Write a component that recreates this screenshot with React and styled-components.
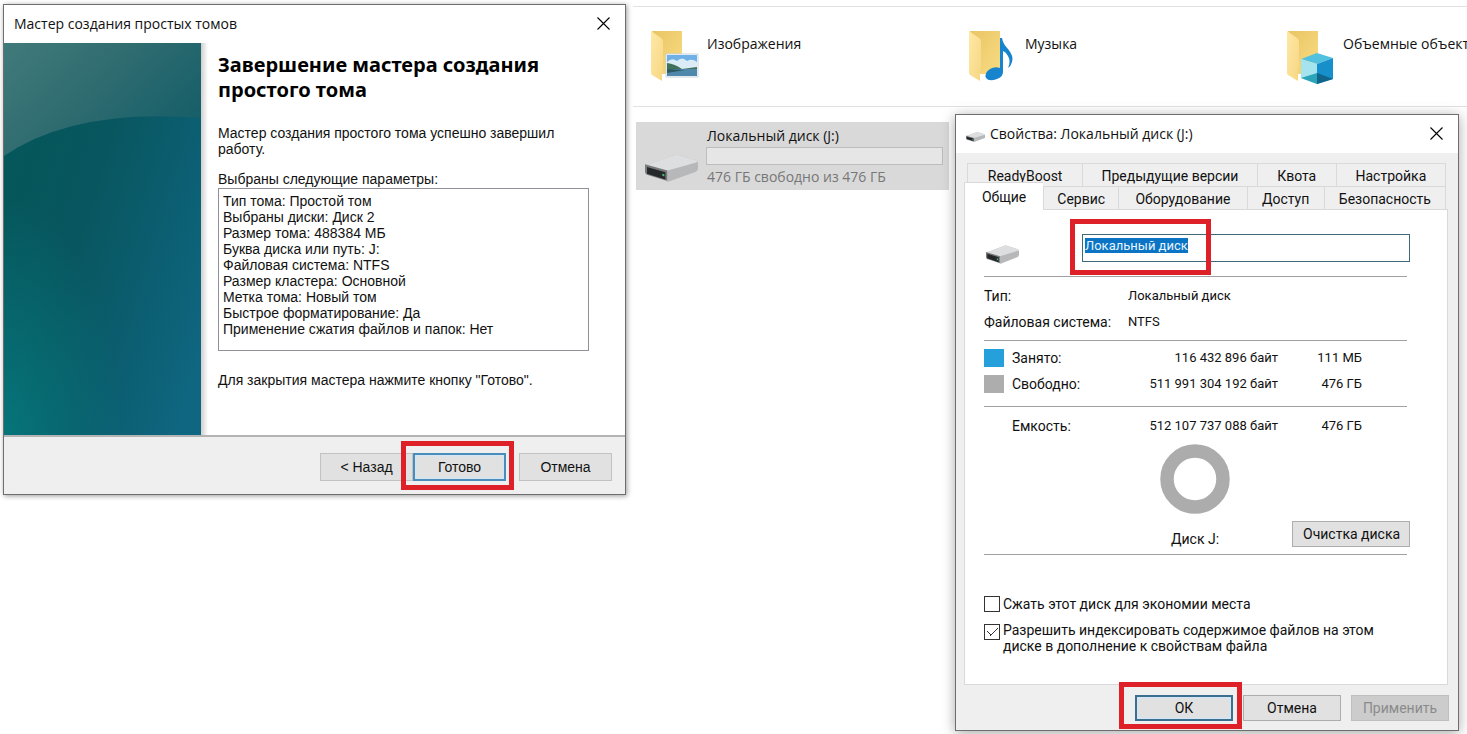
import { useEffect, useRef } from "react";
import styled, { createGlobalStyle } from "styled-components";

const GlobalStyle = createGlobalStyle`
    *, *::after {
        box-sizing: border-box;
    }
    body {
        margin: 0;
        background-color: #fff;
        color: #111;
        font-family: "Liberation Sans", Arial, sans-serif;
        font-size: 14px;
    }
    button, input {
        font: inherit;
        color: inherit;
    }
`;

const segoe = `"Open Sans", "Noto Sans", sans-serif`;

const Desktop = styled.main`
    position: relative;
    display: grid;
    grid-template-columns: auto minmax(0, 1fr);
    align-items: start;
    gap: 7px;
    min-height: 100vh;
    padding-top: 4px;
    padding-left: 3px;
    overflow: hidden;
`;
const TitleBar = styled.header`
    display: flex;
    align-items: center;
    gap: 5px;
    height: 38px;
    padding: 0 8px 1px 10px;
    background-color: #fff;
    font-family: ${segoe};
    h1 {
        flex: 1;
        margin: 0;
        font-size: inherit;
        font-weight: 400;
    }
    > svg {
        margin-top: 6px;
    }
`;
const CloseButton = styled.button`
    display: flex;
    padding: 7px;
    border: 0;
    background: none;
`;
const PushButton = styled.button`
    height: ${props => props.$tall ? "28px" : "26px"};
    min-width: ${props => props.$tall ? "93px" : "98px"};
    padding: 0 10px;
    border: 1px solid ${props => props.$tall ? "#c2c2c2" : "#adadad"};
    background-color: #e1e1e1;
    white-space: nowrap;
    ${props => props.$primary && `
        border: 2px solid ${props.$tall ? "#4a8dbd" : "#3b6f8f"};
        box-shadow: inset 0 0 2px 1px #cfe8f7;
    `}
    &:disabled {
        border-color: #bfbfbf;
        background-color: #ccc;
        color: #8b8b8b;
    }
`;
// red frame that points at the control inside of it
const Marked = styled.div`
    position: relative;
    display: flex;
    &::after {
        content: "";
        position: absolute;
        inset: ${props => props.$inset};
        width: ${props => props.$width || "auto"};
        border: 5px solid #de2128;
        pointer-events: none;
    }
`;

const Wizard = styled.section`
    width: 623px;
    border: 1px solid #6e6e6e;
    background-color: #fff;
    box-shadow: 1px 1px 5px rgba(0, 0, 0, 0.4);
`;
const WizardBody = styled.div`
    display: flex;
    border-bottom: 2px solid #b4b4b4;
`;
const Banner = styled.svg`
    flex: none;
    width: 197px;
    height: 392px;
`;
const BannerShade = styled.div`
    width: 7px;
    background: linear-gradient(to right, #cfcfcf, #fff);
`;
const WizardText = styled.div`
    flex: 1;
    padding: 9px 36px 0 10px;
    line-height: 16px;
    h2 {
        margin: 0 0 23px;
        font-family: "Noto Sans", sans-serif;
        font-size: 20px;
        line-height: 25px;
        color: #000;
    }
    p {
        margin: 0;
    }
    p + p {
        margin-top: 14px;
    }
`;
const Params = styled.ul`
    height: 163px;
    margin: 1px 0 21px;
    padding: 4px;
    border: 1px solid #8e9297;
    list-style: none;
`;
const WizardFooter = styled.footer`
    display: flex;
    justify-content: flex-end;
    padding: 16px 13px 13px;
    background-color: #efefef;
    > ${PushButton}:last-child {
        margin-left: 13px;
    }
`;

const Explorer = styled.section`
    min-width: 0;
    padding-top: 2px;
    font-family: ${segoe};
`;
const Folders = styled.div`
    display: grid;
    grid-template-columns: repeat(3, 318px);
    height: 101px;
    padding: 23px 0 0 18px;
    border-top: 1px solid #e2e2e2;
    border-bottom: 1px solid #e2e2e2;
    overflow: hidden;
`;
const Folder = styled.div`
    display: flex;
    gap: 6px;
    line-height: 28px;
    white-space: nowrap;
`;
const DriveTile = styled.div`
    display: flex;
    gap: 8px;
    width: 313px;
    height: 68px;
    margin: 15px 0 0 3px;
    padding: 4px 6px 0 9px;
    background-color: #d9d9d9;
    line-height: 20px;
    svg {
        margin-top: 28px;
    }
`;
const DriveInfo = styled.div`
    flex: 1;
    span {
        display: block;
        padding-left: 1px;
    }
    span:last-child {
        margin-top: 2px;
        color: #777;
    }
`;
const SpaceBar = styled.div`
    height: 18px;
    margin-top: 1px;
    border: 1px solid #bcbcbc;
    background-color: #e6e6e6;
`;

const Properties = styled.section`
    position: absolute;
    top: 114px;
    right: 8px;
    width: 504px;
    border: 1px solid #6e6e6e;
    background-color: #efefef;
    box-shadow: 0 2px 12px rgba(0, 0, 0, 0.35);
    font-family: Roboto, sans-serif;
`;
const Sheet = styled.div`
    padding: 10px 10px 0 8px;
`;
const TabRow = styled.div`
    display: grid;
    grid-template-columns: ${props => props.$columns};
    margin: ${props => props.$margin};
`;
const Tab = styled.button`
    height: 23px;
    padding: 1px 0 0;
    border: 1px solid #d9d9d9;
    border-width: 1px 0 0 1px;
    background-color: #efefef;
    white-space: nowrap;
    &:last-child {
        border-right-width: 1px;
    }
    &[aria-selected="true"] {
        height: 28px;
        margin: -4px 0 -1px;
        padding: 0;
        background-color: #fff;
        position: relative;
    }
`;
const Panel = styled.div`
    padding: 24px 37px 20px 19px;
    border: 1px solid #d9d9d9;
    background-color: #fff;
    line-height: 16px;
`;
const NameRow = styled.div`
    display: flex;
    justify-content: space-between;
    align-items: flex-start;
    margin-bottom: 12px;
    padding-left: 2px;
    svg {
        margin-top: 11px;
    }
`;
const NameInput = styled.input`
    width: 328px;
    height: 28px;
    padding: 2px 2px 8px;
    border: 1px solid #40697a;
    outline: 0;
    font-size: 13px;
    line-height: 16px;
    &::selection {
        background-color: #0b74c4;
        color: #e8f5ff;
    }
`;
const Group = styled.div`
    margin-right: 3px;
    padding: ${props => props.$padding};
    border-top: 1px solid #a0a0a0;
`;
const Facts = styled.dl`
    display: grid;
    grid-template-columns: 144px 1fr;
    margin: 0;
    line-height: 26px;
    dd {
        margin: 0;
        font-size: 13px;
    }
`;
const Usage = styled.table`
    width: 100%;
    table-layout: fixed;
    border-collapse: collapse;
    th, td {
        height: 26px;
        padding: 0;
        font-size: 13px;
        font-weight: 400;
        text-align: right;
    }
    th {
        width: 98px;
        font-size: 14px;
        text-align: left;
    }
    td:first-child {
        width: 28px;
    }
    td:nth-child(4) {
        width: 84px;
    }
    td:last-child {
        width: 45px;
    }
`;
const Swatch = styled.div`
    width: 20px;
    height: 18px;
    background-color: ${props => props.$color};
`;
const Chart = styled.div`
    display: grid;
    grid-template-columns: 1fr 118px;
    align-items: end;
    margin-bottom: 7px;
    figure {
        display: flex;
        flex-direction: column;
        align-items: center;
        gap: 17px;
        margin: 0;
        padding-left: 114px;
    }
`;
const Check = styled.label`
    display: flex;
    gap: 3px;
    margin-bottom: 10px;
    input {
        flex: none;
        appearance: none;
        width: 16px;
        height: 16px;
        margin: 0;
        border: 1px solid #333;
        background-color: #fff;
    }
    span {
        max-width: 380px;
    }
    input:checked {
        margin-top: 2px;
        background-image: linear-gradient(45deg, transparent 47%, #333 47%, #333 53%, transparent 53%), linear-gradient(-45deg, transparent 44%, #333 44%, #333 56%, transparent 56%);
        background-repeat: no-repeat;
        background-size: 4px 4px, 8px 8px;
        background-position: 2px 6px, 5px 3px;
    }
`;
const DialogButtons = styled.footer`
    display: flex;
    justify-content: flex-end;
    gap: 10px;
    padding: 10px 9px 9px;
`;

const CloseIcon = () => (
    <svg width="13" height="13" viewBox="0 0 13 13" stroke="#000" strokeWidth="1.1" aria-hidden="true">
        <path d="M0.5 0.5l12 12M12.5 0.5l-12 12" />
    </svg>
);

const DriveIcon = ({ width, height }) => (
    <svg width={width} height={height} viewBox="0 0 52 27" preserveAspectRatio="none" aria-hidden="true">
        <path d="M0 11L29 1q2-.6 4 0l17 5q2 1 2 3v5L22 25z" fill="#b5b7b9" />
        <path d="M0 11L29 1q2-.6 4 0l17 5q2 1 1 2L22 17z" fill="#dcdee0" />
        <path d="M0 10l22 6v10L2 20q-2-1-2-3z" fill="#77797b" />
        <path d="M2 12.500l18 5v7L2 19z" fill="#25282a" />
        <path d="M22 16l30-8v6q0 2-2 3l-28 10z" fill="#b6b8ba" />
        <path d="M17 19l2 .6v2l-2-.6z" fill="#43c464" />
    </svg>
);

const FolderIcon = ({ id, children }) => (
    <svg width="50" height="54" viewBox="0 0 50 54" aria-hidden="true">
        <defs>
            <linearGradient id={id + "Back"} x1="0" y1="0" x2="1" y2="1">
                <stop offset="0" stopColor="#e9c565" />
                <stop offset="1" stopColor="#f8dc82" />
            </linearGradient>
            <linearGradient id={id + "Front"} x1="0" y1="0" x2="1" y2="1">
                <stop offset="0" stopColor="#ffe9a6" />
                <stop offset="1" stopColor="#f6d683" />
            </linearGradient>
        </defs>
        <path d="M1 1h30v43H11z" fill={`url(#${id}Back)`} />
        <path d="M0 1l10 7q2 1 2 4v25l-1 3v11L1 45q-1-1-1-2z" fill={`url(#${id}Front)`} />
        {children}
    </svg>
);

const PictureBadge = () => (
    <>
        <path d="M15 24h32v23H15z" fill="#fff" stroke="#c5d4df" />
        <path d="M16 25h30v21H16z" fill="#6fb0e6" />
        <path d="M16 32q5-5 10-1q5-5 10 0q5-3 10 1v7H16z" fill="#dcecf7" />
        <path d="M16 33q8 1 15 6l15-2v3H16z" fill="#41705b" />
        <path d="M16 39h30v7H16z" fill="#4f88ab" />
        <path d="M16 39l18 1-18 3z" fill="#2d5a60" />
    </>
);

const MusicBadge = () => (
    <path d="M31 8h2q1 6 6 11q6 7 4 13q-1 4-4 6q3-7 0-12q-2-4-5-5v21q0 5-6 7q-8 3-11-1q-2-5 4-9q5-3 10-1z" fill="#1785cd" />
);

const CubeBadge = () => (
    <>
        <path d="M14 29l16-6 16 5-16 6z" fill="#52c0df" />
        <path d="M14 29l16 5v20l-16-6z" fill="#a5e4ee" />
        <path d="M30 34l16-6v21l-16 5z" fill="#168fca" />
        <path d="M14 48l16-5v11z" fill="#2ba4b9" />
        <path d="M30 43l16 6-16 5z" fill="#10658c" />
    </>
);

const folders = [
    { id: "pictures", name: "Изображения", badge: <PictureBadge /> },
    { id: "music", name: "Музыка", badge: <MusicBadge /> },
    { id: "objects", name: "Объемные объекты", badge: <CubeBadge /> },
];

const params = [
    "Тип тома: Простой том",
    "Выбраны диски: Диск 2",
    "Размер тома: 488384 МБ",
    "Буква диска или путь: J:",
    "Файловая система: NTFS",
    "Размер кластера: Основной",
    "Метка тома: Новый том",
    "Быстрое форматирование: Да",
    "Применение сжатия файлов и папок: Нет",
];

function UsageRow({ color, label, bytes, size }) {
    return (
        <tr>
            <td>{color && <Swatch $color={color} />}</td>
            <th scope="row">{label}</th>
            <td>{bytes} байт</td>
            <td>{size}</td>
            <td />
        </tr>
    );
}

function WizardWindow() {
    return (
        <Wizard>
            <TitleBar>
                <h1>Мастер создания простых томов</h1>
                <CloseButton aria-label="Закрыть"><CloseIcon /></CloseButton>
            </TitleBar>
            <WizardBody>
                <Banner viewBox="0 0 197 392" preserveAspectRatio="none" aria-hidden="true">
                    <defs>
                        <linearGradient id="sea" x1="0" y1="0.2" x2="1" y2="0.8">
                            <stop offset="0" stopColor="#04575a" />
                            <stop offset="0.4" stopColor="#08565f" />
                            <stop offset="1" stopColor="#0f6680" />
                        </linearGradient>
                        <linearGradient id="sky" x1="0" y1="0" x2="1" y2="0.6">
                            <stop offset="0" stopColor="#417a7b" />
                            <stop offset="0.5" stopColor="#2f6c70" />
                            <stop offset="1" stopColor="#175f69" />
                        </linearGradient>
                        <radialGradient id="glow" cx="0" cy="1" r="0.6">
                            <stop offset="0" stopColor="#06757a" />
                            <stop offset="1" stopColor="#06757a" stopOpacity="0" />
                        </radialGradient>
                    </defs>
                    <path d="M0 0h197v392H0z" fill="url(#sea)" />
                    <path d="M0 0h197v392H0z" fill="url(#glow)" />
                    <path d="M0 0h197v75Q70 65 0 113z" fill="url(#sky)" />
                </Banner>
                <BannerShade />
                <WizardText>
                    <h2>Завершение мастера создания<br />простого тома</h2>
                    <p>Мастер создания простого тома успешно завершил работу.</p>
                    <p>Выбраны следующие параметры:</p>
                    <Params>
                        {params.map(text => <li key={text}>{text}</li>)}
                    </Params>
                    <p>Для закрытия мастера нажмите кнопку "Готово".</p>
                </WizardText>
            </WizardBody>
            <WizardFooter>
                <PushButton $tall>&lt; Назад</PushButton>
                <Marked $inset="-12px -8px -9px -12px">
                    <PushButton $tall $primary>Готово</PushButton>
                </Marked>
                <PushButton $tall>Отмена</PushButton>
            </WizardFooter>
        </Wizard>
    );
}

function PropertiesWindow() {
    const nameRef = useRef(null);
    useEffect(() => {
        nameRef.current.focus();
        nameRef.current.select();
    }, []);
    return (
        <Properties>
            <TitleBar>
                <DriveIcon width={19} height={10} />
                <h1>Свойства: Локальный диск (J:)</h1>
                <CloseButton aria-label="Закрыть"><CloseIcon /></CloseButton>
            </TitleBar>
            <Sheet>
                <div role="tablist">
                    <TabRow $columns="115fr 174fr 79fr 110fr" $margin="0 2px 0 3px">
                        <Tab role="tab">ReadyBoost</Tab>
                        <Tab role="tab">Предыдущие версии</Tab>
                        <Tab role="tab">Квота</Tab>
                        <Tab role="tab">Настройка</Tab>
                    </TabRow>
                    <TabRow $columns="79fr 75fr 128fr 77fr 122fr" $margin="0 2px 0 0">
                        <Tab role="tab" aria-selected="true">Общие</Tab>
                        <Tab role="tab">Сервис</Tab>
                        <Tab role="tab">Оборудование</Tab>
                        <Tab role="tab">Доступ</Tab>
                        <Tab role="tab">Безопасность</Tab>
                    </TabRow>
                </div>
                <Panel role="tabpanel">
                    <NameRow>
                        <DriveIcon width={33} height={19} />
                        <Marked $inset="-15px auto -13px -12px" $width="141px">
                            <NameInput ref={nameRef} defaultValue="Локальный диск" aria-label="Метка тома" />
                        </Marked>
                    </NameRow>
                    <Group $padding="6px 0 5px">
                        <Facts>
                            <dt>Тип:</dt>
                            <dd>Локальный диск</dd>
                            <dt>Файловая система:</dt>
                            <dd>NTFS</dd>
                        </Facts>
                    </Group>
                    <Group $padding="4px 0 9px">
                        <Usage>
                            <tbody>
                                <UsageRow color="#26a0da" label="Занято:" bytes="116 432 896" size="111 МБ" />
                                <UsageRow color="#adadad" label="Свободно:" bytes="511 991 304 192" size="476 ГБ" />
                            </tbody>
                        </Usage>
                    </Group>
                    <Group $padding="6px 0 5px">
                        <Usage>
                            <tbody>
                                <UsageRow label="Емкость:" bytes="512 107 737 088" size="476 ГБ" />
                            </tbody>
                        </Usage>
                    </Group>
                    <Chart>
                        <figure>
                            <svg width="70" height="70" viewBox="0 0 70 70" aria-hidden="true">
                                <circle cx="35" cy="35" r="28" fill="none" stroke="#acacac" strokeWidth="13.500" />
                            </svg>
                            <figcaption>Диск J:</figcaption>
                        </figure>
                        <PushButton>Очистка диска</PushButton>
                    </Chart>
                    <Group $padding="41px 0 0">
                        <Check>
                            <input type="checkbox" />
                            <span>Сжать этот диск для экономии места</span>
                        </Check>
                        <Check>
                            <input type="checkbox" defaultChecked />
                            <span>Разрешить индексировать содержимое файлов на этом диске в дополнение к свойствам файла</span>
                        </Check>
                    </Group>
                </Panel>
            </Sheet>
            <DialogButtons>
                <Marked $inset="-13px -9px -8px -16px">
                    <PushButton $primary>ОК</PushButton>
                </Marked>
                <PushButton>Отмена</PushButton>
                <PushButton disabled>Применить</PushButton>
            </DialogButtons>
        </Properties>
    );
}

export default function App() {
    return (
        <Desktop>
            <GlobalStyle />
            <WizardWindow />
            <Explorer>
                <Folders>
                    {folders.map(folder => (
                        <Folder key={folder.id}>
                            <FolderIcon id={folder.id}>{folder.badge}</FolderIcon>
                            {folder.name}
                        </Folder>
                    ))}
                </Folders>
                <DriveTile>
                    <DriveIcon width={53} height={28} />
                    <DriveInfo>
                        <span>Локальный диск (J:)</span>
                        <SpaceBar />
                        <span>476 ГБ свободно из 476 ГБ</span>
                    </DriveInfo>
                </DriveTile>
            </Explorer>
            <PropertiesWindow />
        </Desktop>
    );
}
